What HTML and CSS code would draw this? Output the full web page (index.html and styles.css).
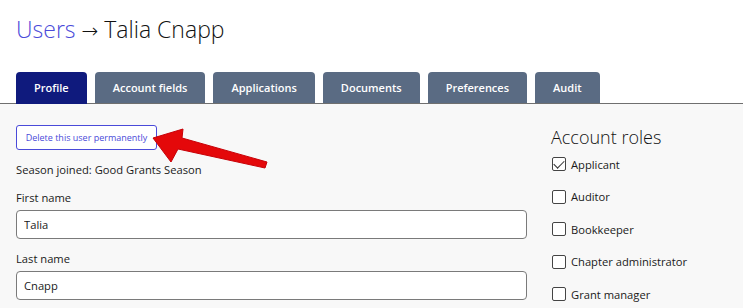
FILE: index.html
```html
<!DOCTYPE html>
<html lang="en">
<head>
  <meta charset="UTF-8" />
  <title>Users - Talia Cnapp</title>
  <link rel="stylesheet" href="styles.css">
</head>
<body>
  <header class="page-head">
    <h1><a href="#" class="crumb">Users</a> <span class="sep">→</span> Talia Cnapp</h1>
  </header>

  <nav class="tabs">
    <a href="#" class="tab active">Profile</a>
    <a href="#" class="tab">Account fields</a>
    <a href="#" class="tab">Applications</a>
    <a href="#" class="tab">Documents</a>
    <a href="#" class="tab">Preferences</a>
    <a href="#" class="tab">Audit</a>
  </nav>

  <main class="content">
    <section class="profile">
      <button type="button" class="btn-delete">Delete this user permanently</button>
      <p class="season">Season joined: Good Grants Season</p>

      <div class="field">
        <label for="first-name">First name</label>
        <input type="text" id="first-name" value="Talia" />
      </div>
      <div class="field">
        <label for="last-name">Last name</label>
        <input type="text" id="last-name" value="Cnapp" />
      </div>
    </section>

    <aside class="roles">
      <h2>Account roles</h2>
      <label class="role"><input type="checkbox" checked /> Applicant</label>
      <label class="role"><input type="checkbox" /> Auditor</label>
      <label class="role"><input type="checkbox" /> Bookkeeper</label>
      <label class="role"><input type="checkbox" /> Chapter administrator</label>
      <label class="role"><input type="checkbox" /> Grant manager</label>
    </aside>

    <!-- annotation arrow pointing at the delete button -->
    <svg class="pointer" width="130" height="50" viewBox="0 0 130 50">
      <polygon points="1,16 31,7 30,16 115,40 113,46 26,27 19,40" fill="#e4080a" stroke="#c70007" stroke-width="1" stroke-linejoin="round"/>
    </svg>
  </main>
</body>
</html>
```

FILE: styles.css
```css
* { box-sizing: border-box; margin: 0; padding: 0; }
body {
  font-family: 'Open Sans', sans-serif;
  color: #1a1a1a;
  background: #f8f8f8;
  width: 743px;
  height: 308px;
  overflow: hidden;
}
.page-head {
  background: #fff;
  padding: 12px 16px 0;
  height: 72px;
}
h1 {
  font-size: 23px;
  font-weight: 300;
  line-height: 34px;
  color: #111;
}
.crumb { color: #4a4ad9; text-decoration: none; }
.sep { font-family: 'DejaVu Sans', sans-serif; font-size: 20px; }

.tabs {
  display: flex;
  gap: 8px;
  padding: 0 16px;
  background: #fff;
  border-bottom: 1px solid #6f6f6f;
  height: 32px;
}
.tab {
  background: #5a6b83;
  color: #fff;
  font-size: 11px;
  font-weight: 600;
  text-decoration: none;
  padding: 0 18px;
  line-height: 31px;
  border-radius: 4px 4px 0 0;
}
.tab.active {
  background: #0f1a7d;
  height: 32px;
  line-height: 32px;
}

.content {
  position: relative;
  display: grid;
  grid-template-columns: 511px 1fr;
  gap: 24px;
  padding: 20px 16px 0;
}
.btn-delete {
  font-family: inherit;
  font-size: 9px;
  color: #4a4ad9;
  background: #fff;
  border: 1px solid #4a4ad9;
  border-radius: 3px;
  height: 25px;
  width: 141px;
  cursor: pointer;
}
.season {
  font-size: 11.2px;
  margin: 12px 0 13px;
}
.field { margin-bottom: 12px; }
.field label {
  display: block;
  font-size: 11.2px;
  margin-bottom: 5px;
}
.field input {
  width: 100%;
  height: 29px;
  border: 1px solid #7a7a7a;
  border-radius: 4px;
  background: #fff;
  padding: 0 7px;
  font-family: inherit;
  font-size: 11.2px;
  color: #1a1a1a;
}
.roles h2 {
  font-size: 18px;
  font-weight: 300;
  line-height: 26px;
  margin: 0 0 4px;
  color: #111;
}
.role {
  display: flex;
  align-items: center;
  gap: 5px;
  font-size: 11.2px;
  height: 20px;
  margin-bottom: 12.5px;
}
.role input {
  appearance: none;
  width: 14px;
  height: 14px;
  margin: 0 0 0 1px;
  border: 1px solid #444;
  border-radius: 2px;
  background: #fff;
  position: relative;
}
.role input:checked::after {
  content: "";
  position: absolute;
  left: 3px;
  top: 0;
  width: 5px;
  height: 9px;
  border: solid #333;
  border-width: 0 1px 1px 0;
  transform: rotate(45deg);
}
.pointer {
  position: absolute;
  left: 152px;
  top: 18px;
}
```
